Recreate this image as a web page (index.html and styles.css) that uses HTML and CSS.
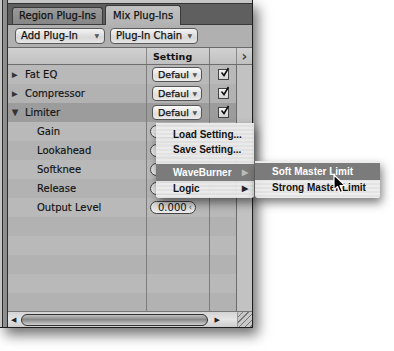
FILE: index.html
```html
<!DOCTYPE html>
<html>
<head>
<meta charset="utf-8">
<link rel="stylesheet" href="styles.css">
</head>
<body>
<div class="window">
  <div class="lframe"></div>
  <div class="main">
    <div class="topstrip"></div>
    <div class="tabbar">
      <div class="tab inactive">Region Plug-Ins</div>
      <div class="tab active">Mix Plug-Ins</div>
    </div>
    <div class="toolbar">
      <div class="tbtn add"><span>Add Plug-In</span><span class="arr">▼</span></div>
      <div class="tbtn chain"><span>Plug-In Chain</span><span class="arr">▼</span></div>
    </div>
    <div class="table">
      <div class="grid">
        <div class="row header">
          <div class="c-name"></div>
          <div class="c-set">Setting</div>
          <div class="c-chk"></div>
          <div class="c-scr">›</div>
        </div>
        <div class="row s1">
          <div class="c-name"><span class="tri">▶</span>Fat EQ</div>
          <div class="c-set"><div class="pop"><span>Defaul</span><span class="arr">▼</span></div></div>
          <div class="c-chk"><div class="chk"><svg viewBox="0 0 11 11" width="11" height="11"><path d="M2.5 5.5 L5 8.5 L9.5 1" fill="none" stroke="#111" stroke-width="1.6"/></svg></div></div>
          <div class="c-scr"></div>
        </div>
        <div class="row s2">
          <div class="c-name"><span class="tri">▶</span>Compressor</div>
          <div class="c-set"><div class="pop"><span>Defaul</span><span class="arr">▼</span></div></div>
          <div class="c-chk"><div class="chk"><svg viewBox="0 0 11 11" width="11" height="11"><path d="M2.5 5.5 L5 8.5 L9.5 1" fill="none" stroke="#111" stroke-width="1.6"/></svg></div></div>
          <div class="c-scr"></div>
        </div>
        <div class="row sel">
          <div class="c-name"><span class="tri down">▼</span>Limiter</div>
          <div class="c-set"><div class="pop"><span>Defaul</span><span class="arr">▼</span></div></div>
          <div class="c-chk"><div class="chk"><svg viewBox="0 0 11 11" width="11" height="11"><path d="M2.5 5.5 L5 8.5 L9.5 1" fill="none" stroke="#111" stroke-width="1.6"/></svg></div></div>
          <div class="c-scr"></div>
        </div>
        <div class="row s1">
          <div class="c-name sub">Gain</div>
          <div class="c-set"><div class="field"></div></div>
          <div class="c-chk"></div><div class="c-scr"></div>
        </div>
        <div class="row s2">
          <div class="c-name sub">Lookahead</div>
          <div class="c-set"><div class="field"></div></div>
          <div class="c-chk"></div><div class="c-scr"></div>
        </div>
        <div class="row s1">
          <div class="c-name sub">Softknee</div>
          <div class="c-set"><div class="field"></div></div>
          <div class="c-chk"></div><div class="c-scr"></div>
        </div>
        <div class="row s2">
          <div class="c-name sub">Release</div>
          <div class="c-set"><div class="field"></div></div>
          <div class="c-chk"></div><div class="c-scr"></div>
        </div>
        <div class="row s1">
          <div class="c-name sub">Output Level</div>
          <div class="c-set"><div class="field">0.000<span class="cur">‹</span></div></div>
          <div class="c-chk"></div><div class="c-scr"></div>
        </div>
        <div class="row s2"><div class="c-name"></div><div class="c-set"></div><div class="c-chk"></div><div class="c-scr"></div></div>
        <div class="row s1"><div class="c-name"></div><div class="c-set"></div><div class="c-chk"></div><div class="c-scr"></div></div>
        <div class="row s2"><div class="c-name"></div><div class="c-set"></div><div class="c-chk"></div><div class="c-scr"></div></div>
        <div class="row s1"><div class="c-name"></div><div class="c-set"></div><div class="c-chk"></div><div class="c-scr"></div></div>
        <div class="row s2 last"><div class="c-name"></div><div class="c-set"></div><div class="c-chk"></div><div class="c-scr"></div></div>
      </div>
      <div class="hscroll">
        <div class="track">
          <span class="sarr">◀</span>
          <div class="thumb"></div>
          <span class="sarr">▶</span>
        </div>
        <div class="grip"></div>
      </div>
    </div>
  </div>

  <div class="menu">
    <div class="mi">Load Setting...</div>
    <div class="mi">Save Setting...</div>
    <div class="msep"></div>
    <div class="mi hl">WaveBurner<span class="marr">▶</span></div>
    <div class="mi">Logic<span class="marr">▶</span></div>
  </div>
  <div class="menu submenu">
    <div class="mi hl">Soft Master Limit</div>
    <div class="mi">Strong Master Limit</div>
  </div>
  <svg class="cursor" width="14" height="21" viewBox="0 0 14 21"><path d="M1 1 L1 16 L4.5 12.5 L7 18.5 L9.5 17.5 L7 11.5 L12 11.5 Z" fill="#000" stroke="#fff" stroke-width="1.2" stroke-linejoin="round"/></svg>
</div>
</body>
</html>
```
FILE: styles.css
```css
html, body { margin: 0; padding: 0; background: #fff; }
body { width: 394px; height: 351px; overflow: hidden; font-family: "DejaVu Sans", sans-serif; font-size: 10px; color: #111; }

.window {
  position: relative;
  display: flex;
  width: 252px;
  height: 327px;
  border-right: 1px solid #1e1e1e;
  border-bottom: 1px solid #1e1e1e;
  box-shadow: 5px 7px 12px rgba(0,0,0,0.55);
  background: #b8b8b8;
}
.lframe {
  width: 8px;
  flex: none;
  background: linear-gradient(to right, #c4c4c4 0, #c4c4c4 2px, #2c2c2c 2px, #2c2c2c 3px, #929292 3px, #8a8a8a 7px, #2c2c2c 7px, #2c2c2c 8px);
}
.main { flex: 1; display: flex; flex-direction: column; min-width: 0; }
.topstrip { height: 3px; background: #c6c6c6; border-bottom: 1px solid #333; }
.tabbar {
  height: 21px;
  background: #5f5f5f;
  display: flex;
  align-items: flex-end;
  padding-left: 4px;
  gap: 2px;
}
.tab {
  font-size: 10px;
  -webkit-text-stroke: 0.25px #111;
  border: 1px solid #3a3a3a;
  border-bottom: none;
  border-radius: 3px 3px 0 0;
  padding: 0 6px;
}
.tab.inactive { height: 16px; line-height: 16px; background: linear-gradient(#9a9a9a, #868686); margin-bottom: 0; }
.tab.active { height: 19px; line-height: 19px; background: linear-gradient(#c2c2c2, #b2b2b2); padding: 0 7px; margin-bottom: -1px; position: relative; }
.toolbar {
  height: 24px;
  background: #b0b0b0;
  border-top: 1px solid #3a3a3a;
  border-bottom: 1px solid #6a6a6a;
  display: flex;
  align-items: center;
  padding-left: 7px;
  gap: 5px;
}
.tbtn {
  height: 14px;
  border: 1px solid #5a5a5a;
  border-radius: 4px;
  background: linear-gradient(#f4f4f4, #d8d8d8 60%, #e6e6e6);
  display: flex;
  align-items: center;
  justify-content: space-between;
  padding: 0 5px 0 5px;
  font-size: 10px;
  -webkit-text-stroke: 0.25px #111;
  box-sizing: content-box;
}
.tbtn.add { width: 78px; }
.tbtn.chain { width: 76px; }
.arr { font-size: 6px; color: #555; -webkit-text-stroke: 0; }

.table { flex: 1; display: flex; flex-direction: column; }
.grid { flex: 1; display: flex; flex-direction: column; }
.row { display: flex; height: 19px; align-items: stretch; }
.row > div { display: flex; align-items: center; box-sizing: border-box; }
.c-name { width: 139px; border-right: 1px solid #7c7c7c; padding-left: 4px; }
.c-set { width: 63px; border-right: 1px solid #7c7c7c; padding-left: 5px; }
.c-chk { width: 27px; border-right: 1px solid #6c6c6c; justify-content: center; }
.c-scr { width: 15px; background: #c2c2c2; }

.row.header { height: 16px; background: linear-gradient(#d2d2d2, #c0c0c0); border-bottom: 1px solid #6e6e6e; }
.row.header .c-set { font-weight: bold; font-size: 9.5px; padding-left: 6px; }
.row.header .c-chk, .row.header .c-name { border-right-color: #888; }
.row.header .c-scr { background: transparent; justify-content: center; font-size: 14px; color: #444; font-weight: bold; }
.row.s1 { background: #b9b9b9; }
.row.s2 { background: #b2b2b2; }
.row.sel { background: #9c9c9c; }
.row.last { height: 18px; }

.tri { font-size: 7px; color: #333; width: 13px; display: inline-block; }
.tri.down { font-size: 8px; }
.c-name.sub { padding-left: 29px; }
.row > .c-name { -webkit-text-stroke: 0.15px #111; }

.pop {
  width: 48px;
  height: 13px;
  border: 1px solid #555;
  border-radius: 4px;
  background: linear-gradient(#fbfbfb, #dedede 60%, #ececec);
  display: flex;
  align-items: center;
  justify-content: space-between;
  padding: 0 4px 0 5px;
  box-sizing: border-box;
  width: 50px;
  height: 15px;
  font-size: 9.5px;
  -webkit-text-stroke: 0.25px #111;
}
.chk {
  width: 11px; height: 11px;
  border: 1px solid #444;
  background: linear-gradient(#f4f4f4, #d4d4d4);
  box-sizing: border-box;
  display: flex; align-items: center; justify-content: center;
  position: relative;
}
.chk svg { position: absolute; left: 0; top: -3px; }
.field {
  width: 46px; height: 13px;
  margin-left: -2px;
  border: 1px solid #444;
  border-radius: 7px;
  background: linear-gradient(#d8d8d8, #eeeeee);
  box-sizing: border-box;
  font-size: 10px;
  display: flex; align-items: center; padding-left: 7px;
}
.cur { font-size: 8px; margin-left: 2px; color: #444; }

.hscroll { height: 15px; display: flex; border-top: 1px solid #777; }
.track {
  width: 229px;
  display: flex; align-items: center;
  background: linear-gradient(#d4d4d4, #e4e4e4 50%, #cccccc);
  padding: 0 3px;
  box-sizing: border-box;
}
.sarr { font-size: 7px; color: #222; }
.thumb {
  width: 187px; height: 12px; margin: 0 6px 0 5px;
  border: 1px solid #333;
  border-radius: 7px;
  background: linear-gradient(#c0c0c0, #8a8a8a 45%, #a8a8a8 70%, #d0d0d0);
  box-sizing: border-box;
}
.grip {
  flex: 1;
  background: repeating-linear-gradient(135deg, #c8c8c8 0, #c8c8c8 3px, #777 3px, #777 4px);
  border-left: 1px solid #999;
}

.menu {
  position: absolute;
  left: 156px; top: 123px;
  width: 98px;
  padding: 4px 0 2px;
  background: repeating-linear-gradient(to bottom, rgba(236,236,236,0.95) 0, rgba(236,236,236,0.95) 2px, rgba(226,226,226,0.95) 2px, rgba(226,226,226,0.95) 4px);
  box-shadow: 2px 5px 10px rgba(0,0,0,0.5);
  border-radius: 0 0 3px 3px;
  font-family: "Liberation Sans", sans-serif;
  font-weight: bold;
  font-size: 10px;
}
.mi { height: 15px; line-height: 15px; padding-left: 17px; position: relative; color: #111; }
.mi.hl { background: #7b7b7b; color: #fff; height: 17px; line-height: 17px; }
.msep { height: 7px; }
.marr { position: absolute; right: 6px; font-size: 8px; color: #222; }
.mi.hl .marr { color: #bbb; }
.submenu { left: 255px; top: 161px; width: 125px; padding: 2px 0 3px; }
.cursor { position: absolute; left: 333px; top: 174px; }
```
